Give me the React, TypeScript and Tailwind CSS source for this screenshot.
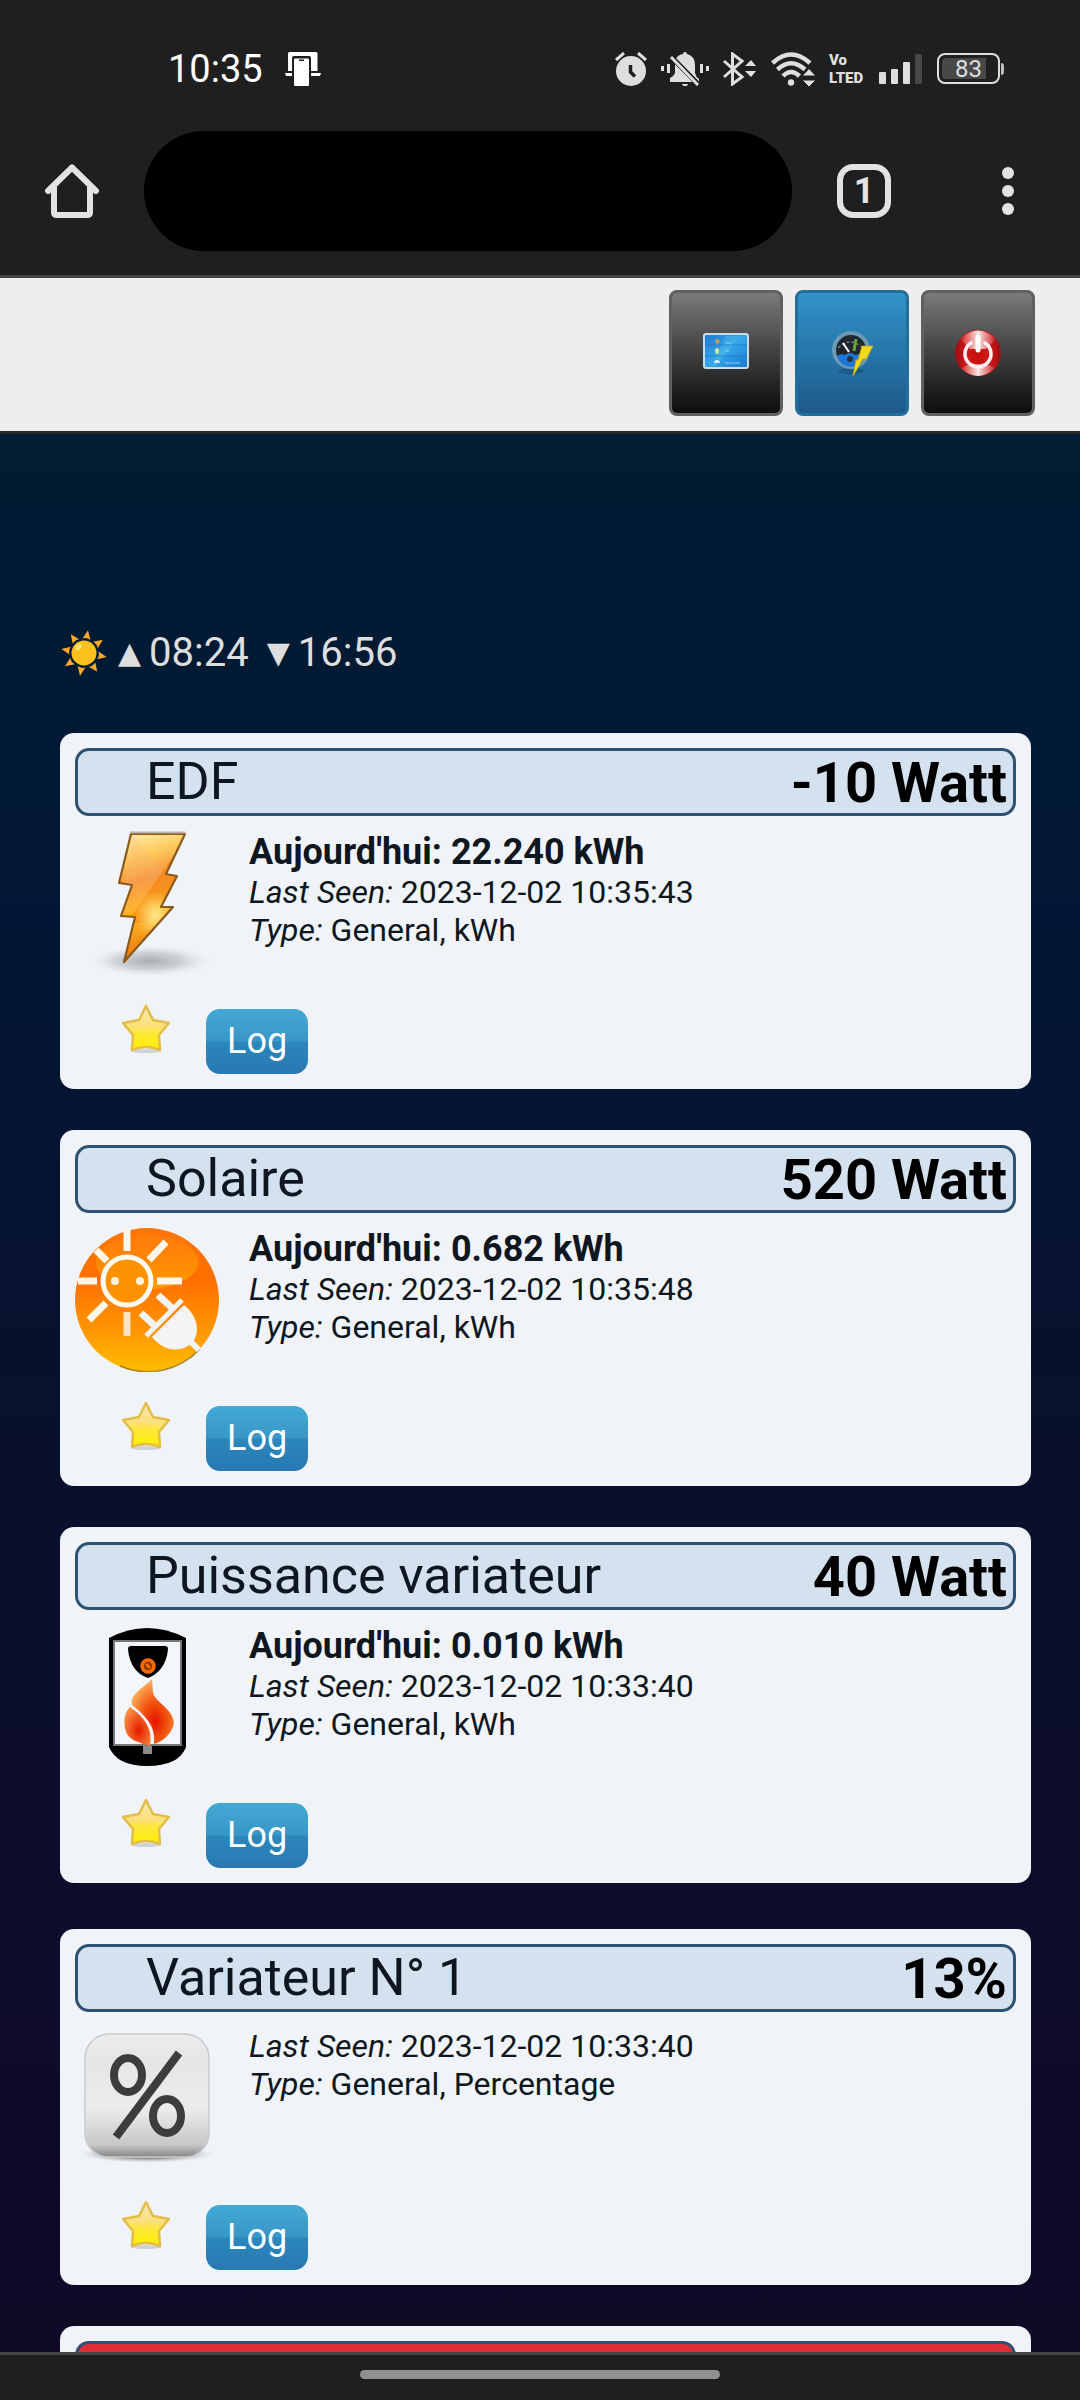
import type { ReactNode } from 'react';

type IconName = 'bolt' | 'solar' | 'heater' | 'percent';

interface Device {
  name: string;
  value: string;
  today?: string;
  lastSeen: string;
  type: string;
  icon: IconName;
}

// Devices are grouped the way the dashboard lists them
const groups: Device[][] = [
  [
    { name: 'EDF', value: '-10 Watt', today: '22.240 kWh', lastSeen: '2023-12-02 10:35:43', type: 'General, kWh', icon: 'bolt' },
    { name: 'Solaire', value: '520 Watt', today: '0.682 kWh', lastSeen: '2023-12-02 10:35:48', type: 'General, kWh', icon: 'solar' },
    { name: 'Puissance variateur', value: '40 Watt', today: '0.010 kWh', lastSeen: '2023-12-02 10:33:40', type: 'General, kWh', icon: 'heater' },
  ],
  [
    { name: 'Variateur N° 1', value: '13%', lastSeen: '2023-12-02 10:33:40', type: 'General, Percentage', icon: 'percent' },
  ],
];

/* ---------- Device icons ---------- */

function BoltIcon() {
  return (
    <svg viewBox="0 0 144 144" className="size-36">
      <defs>
        <linearGradient id="boltFill" x1="0" y1="0" x2="0.15" y2="1">
          <stop offset="0" stopColor="#fff0b0" />
          <stop offset="0.22" stopColor="#fdc85a" />
          <stop offset="0.4" stopColor="#f5943a" />
          <stop offset="0.62" stopColor="#fdb515" />
          <stop offset="0.78" stopColor="#fba31c" />
          <stop offset="1" stopColor="#e0700c" />
        </linearGradient>
        <radialGradient id="boltShadow">
          <stop offset="0" stopColor="#a9acb0" />
          <stop offset="0.5" stopColor="#c6c9cd" stopOpacity="0.8" />
          <stop offset="1" stopColor="#f1f4f9" stopOpacity="0" />
        </radialGradient>
        <radialGradient id="boltGlow">
          <stop offset="0" stopColor="#ffe88a" />
          <stop offset="1" stopColor="#ffe88a" stopOpacity="0" />
        </radialGradient>
        <clipPath id="boltClip">
          <path d="M56 3H110L91 43L102 45L86 76L98 76L49 131L60 86L46 85L57 54L44 52Z" />
        </clipPath>
      </defs>
      <ellipse cx="75" cy="130" rx="66" ry="17" fill="url(#boltShadow)" />
      <path d="M56 3H110L91 43L102 45L86 76L98 76L49 131L60 86L46 85L57 54L44 52Z" fill="url(#boltFill)" />
      <g clipPath="url(#boltClip)">
        <path d="M100 22L52 92L72 92L104 46L91 43Z" fill="#f47a10" opacity="0.45" />
        <ellipse cx="80" cy="84" rx="20" ry="24" fill="url(#boltGlow)" />
        <path d="M58 5L46 84L60 80L88 40Z" fill="#ffb37a" opacity="0.25" />
      </g>
      <path
        d="M56 3H110L91 43L102 45L86 76L98 76L49 131L60 86L46 85L57 54L44 52Z"
        fill="none"
        stroke="#8a5a1c"
        strokeWidth="2.2"
        strokeLinejoin="round"
      />
      <path d="M55 1.5H110" stroke="#b9b2aa" strokeWidth="2" />
    </svg>
  );
}

function SolarIcon() {
  return (
    <svg viewBox="0 0 144 144" className="size-36">
      <defs>
        <linearGradient id="solarFill" x1="0" y1="0" x2="0" y2="1">
          <stop offset="0" stopColor="#ff7608" />
          <stop offset="0.35" stopColor="#ff6f00" />
          <stop offset="0.7" stopColor="#ff9500" />
          <stop offset="1" stopColor="#ffbe00" />
        </linearGradient>
        <linearGradient id="solarGloss" x1="0" y1="0" x2="0" y2="1">
          <stop offset="0" stopColor="#ff7a0a" />
          <stop offset="1" stopColor="#ff9a00" />
        </linearGradient>
      </defs>
      <circle cx="72" cy="72" r="72" fill="url(#solarFill)" />
      <path d="M125 121A71 71 0 0 1 45 138" fill="none" stroke="#8a6410" strokeWidth="1.5" opacity="0.7" />
      <ellipse cx="72" cy="34" rx="51" ry="27" fill="url(#solarGloss)" />
      <circle cx="52" cy="53" r="24" fill="#ff9200" stroke="#fffaf2" strokeWidth="5" />
      <g stroke="#fff6ea" strokeWidth="7">
        <path d="M52 1V23M82 53H107M3 53H22M74 32L91 14M32 33L21 22M31 75L14 92" />
        <path d="M52 84V108" stroke="#ffe3c0" />
      </g>
      <g fill="#fff3dc">
        <circle cx="40" cy="53" r="4" />
        <circle cx="65" cy="53" r="4" />
      </g>
      <g stroke="#f4f4f4">
        <path d="M83 67L97 80M66 85L79 97" strokeWidth="7" />
        <path d="M71 108L107 72" strokeWidth="5" />
        <path d="M116 114L124 122" strokeWidth="6" />
      </g>
      <path d="M109 77C121 86 126 102 118 114C106 126 88 123 77 109Z" fill="#f4f4f4" />
    </svg>
  );
}

function HeaterIcon() {
  return (
    <svg viewBox="0 0 144 144" className="size-36">
      <defs>
        <radialGradient id="flameRight" cx="0.55" cy="0.65" r="0.6">
          <stop offset="0" stopColor="#e61400" />
          <stop offset="0.5" stopColor="#f2540f" />
          <stop offset="1" stopColor="#fca552" />
        </radialGradient>
        <radialGradient id="flameLeft" cx="0.55" cy="0.6" r="0.6">
          <stop offset="0" stopColor="#e41a00" />
          <stop offset="1" stopColor="#f98a3c" />
        </radialGradient>
      </defs>
      <path d="M34 13Q72 -7 111 13V122Q104 141 72 141Q42 141 34 122Z" fill="#000000" />
      <rect x="39" y="16" width="67" height="104" fill="#f3f6fa" stroke="#777777" strokeWidth="2" />
      <path d="M53 24Q53 21 56 21H90Q93 21 93 24C92 40 82 50 73 53C63 50 54 40 53 24Z" fill="#000000" />
      <circle cx="73" cy="41" r="6" fill="#8a3a00" stroke="#ff6a00" strokeWidth="3.5" />
      <path d="M71 39L75 43" stroke="#ff6a00" strokeWidth="2.5" />
      <path d="M77 54C78 62 77 68 80 72C86 80 98 86 99 98C97 109 87 117 79 119C81 102 72 92 57 80C55 68 68 64 77 54Z" fill="url(#flameRight)" />
      <path d="M55 82C49 88 48 97 51 107C54 115 65 118 75 121C78 105 71 93 55 82Z" fill="url(#flameLeft)" />
      <rect x="68" y="121" width="9" height="8" fill="#8a8a8a" />
    </svg>
  );
}

function PercentIcon() {
  return (
    <svg viewBox="0 0 144 144" className="size-36">
      <defs>
        <linearGradient id="keyFill" x1="0" y1="0" x2="0" y2="1">
          <stop offset="0" stopColor="#eceeed" />
          <stop offset="0.2" stopColor="#e4e6e5" />
          <stop offset="0.6" stopColor="#eceeed" />
          <stop offset="0.9" stopColor="#c6c8c7" />
          <stop offset="1" stopColor="#858786" />
        </linearGradient>
        <radialGradient id="keyShadow">
          <stop offset="0.5" stopColor="#777777" stopOpacity="0.8" />
          <stop offset="1" stopColor="#cccccc" stopOpacity="0" />
        </radialGradient>
      </defs>
      <ellipse cx="72" cy="127" rx="68" ry="9" fill="url(#keyShadow)" />
      <rect x="10" y="7" width="124" height="123" rx="24" fill="url(#keyFill)" stroke="#c9cacc" strokeWidth="1.5" />
      <g fill="none" stroke="#3c3e3e">
        <ellipse cx="53" cy="48" rx="14" ry="17" strokeWidth="8" />
        <ellipse cx="92" cy="89" rx="14" ry="17" strokeWidth="8" />
        <path d="M104 26L41 110" strokeWidth="8" />
      </g>
    </svg>
  );
}

function StarIcon() {
  return (
    <svg viewBox="0 0 48 48" className="size-12">
      <defs>
        <linearGradient id="starFill" x1="0" y1="0" x2="0" y2="1">
          <stop offset="0" stopColor="#fbe6b8" />
          <stop offset="0.45" stopColor="#fbe07a" />
          <stop offset="0.6" stopColor="#fde83a" />
          <stop offset="1" stopColor="#fff000" />
        </linearGradient>
      </defs>
      <ellipse cx="24" cy="46" rx="15" ry="2" fill="#cfd2d6" />
      <path
        d="M24 1L31 15L47 18L37 30L38 45Q24 39 10 45L11 30L1 18L17 15Z"
        fill="url(#starFill)"
        stroke="#e3bd48"
        strokeWidth="2.5"
        strokeLinejoin="round"
      />
    </svg>
  );
}

const deviceIcons: Record<IconName, () => ReactNode> = {
  bolt: BoltIcon,
  solar: SolarIcon,
  heater: HeaterIcon,
  percent: PercentIcon,
};

/* ---------- Phone status bar ---------- */

function StatusBar() {
  return (
    <div className="flex h-[131px] items-center justify-between pt-[6px] pr-[76px] pl-[168px] text-[#dedede]">
      <div className="flex items-center gap-[22px] text-white">
        <span className="text-[38px] leading-none">10:35</span>
        <svg viewBox="0 0 36 34" className="h-[34px] w-9" fill="currentColor">
          <path d="M3 1.5Q3 0 4.500 0H31Q32.500 0 32.500 1.500V19H26V6Q26 4 24 4H9Q7 4 7 6V19H3Z" />
          <rect x="9" y="6.500" width="15" height="27.500" rx="1" />
          <rect x="14" y="7.500" width="5" height="1.500" fill="#1f1f1f" />
          <path d="M0 21H7V24H1ZM26 21H36L35 24H26Z" />
        </svg>
      </div>

      <div className="flex items-center gap-[14px]">
        {/* Alarm */}
        <svg viewBox="0 0 32 34" className="h-[34px] w-8">
          <circle cx="16" cy="19" r="15" fill="currentColor" />
          <path d="M1 8L9 1M31 8L23 1" stroke="currentColor" strokeWidth="3" />
          <path d="M15.500 13V20L20 24.500" fill="none" stroke="#1f1f1f" strokeWidth="3.500" />
        </svg>
        {/* Vibrate */}
        <svg viewBox="0 0 48 34" className="h-[34px] w-12" fill="currentColor">
          <path d="M17 4Q20 2 22 2Q22 0 24 0Q26 0 26 2Q34 4 34 13V21Q35 25 38 27V30L13 9Z" />
          <path d="M14 12V21Q13 24 9 26V30H32Z" />
          <path d="M21 32H27Q26 34.500 24 34.500Q22 34.500 21 32Z" />
          <path d="M9.500 4L38 33" stroke="#1f1f1f" strokeWidth="5" />
          <path d="M10 5L37 33" stroke="currentColor" strokeWidth="3" />
          <path d="M0 14H3V19H0ZM6 12H9V21H6ZM39 12H42V21H39ZM45 14H48V19H45Z" />
        </svg>
        {/* Bluetooth */}
        <svg viewBox="0 0 34 34" className="size-[34px]" fill="none" stroke="currentColor" strokeWidth="3">
          <path d="M1 9L19 25L9.500 32V2L19 9L1 25" />
          <path d="M22 14L28 8L33 14ZM22 19H33L28 25Z" fill="currentColor" stroke="none" />
        </svg>
        {/* Wifi */}
        <svg viewBox="0 0 44 34" className="h-[34px] w-11" fill="none" stroke="currentColor" strokeWidth="4.500">
          <path d="M1.500 11Q20 -6 39 11M6.500 17.500Q20 5 34 17.500M12 24Q20 16 28.500 24" />
          <circle cx="20" cy="30.500" r="3.200" fill="currentColor" stroke="none" />
          <path d="M31 24L38 16.500L45 24ZM31 28H45L38 35Z" fill="currentColor" stroke="#1f1f1f" strokeWidth="1" />
        </svg>
        {/* VoLTE */}
        <div className="flex w-9 flex-col text-[15px] leading-[18px] font-black">
          <span>Vo</span>
          <span>LTED</span>
        </div>
        {/* Signal */}
        <svg viewBox="0 0 44 30" className="h-[30px] w-11" fill="currentColor">
          <rect x="0" y="18" width="7" height="12" rx="1" />
          <rect x="12" y="15" width="7" height="15" rx="1" />
          <rect x="24" y="8" width="7" height="22" rx="1" />
          <rect x="36" y="0" width="7" height="30" rx="2" fill="#484848" />
        </svg>
        {/* Battery */}
        <div className="flex items-center gap-px">
          <div className="flex h-[31px] w-[63px] rounded-lg border-2 border-[#dedede] p-[3px]">
            <div className="flex w-11 items-center justify-end rounded-l-sm bg-[#484848] pr-1 text-2xl leading-none">
              83
            </div>
          </div>
          <div className="h-3 w-[3px] rounded-r-sm bg-[#bdbdbd]" />
        </div>
      </div>
    </div>
  );
}

/* ---------- Browser bar ---------- */

function BrowserBar() {
  return (
    <div className="flex items-center gap-[45px] px-[45px] pb-6">
      <button aria-label="Accueil">
        <svg viewBox="0 0 54 54" className="size-[54px]" fill="none" stroke="#e3e3e3" strokeWidth="6">
          <path d="M3 27L27 3.500L51 27" strokeLinecap="round" strokeLinejoin="round" />
          <path d="M9 23V48Q9 51 12 51H42Q45 51 45 48V23" />
        </svg>
      </button>
      <input type="text" aria-label="Adresse" className="h-[120px] min-w-0 flex-1 rounded-full bg-black px-12 text-4xl" />
      <button
        aria-label="Onglets"
        className="flex size-[54px] items-center justify-center rounded-[16px] border-6 border-[#e3e3e3] text-4xl leading-none font-bold text-[#e3e3e3]"
      >
        1
      </button>
      <button aria-label="Menu" className="ml-[45px] flex w-[54px] flex-col items-center gap-[6px]">
        <span className="size-3 rounded-full bg-[#e3e3e3]" />
        <span className="size-3 rounded-full bg-[#e3e3e3]" />
        <span className="size-3 rounded-full bg-[#e3e3e3]" />
      </button>
    </div>
  );
}

/* ---------- Site toolbar ---------- */

function Toolbar() {
  return (
    <nav className="flex justify-end gap-3 border-b-3 border-[#262a2d] bg-[#eeeeee] px-[45px] pt-3 pb-[15px]">
      <button
        aria-label="Tableau de bord"
        className="flex h-[126px] w-[114px] items-center justify-center rounded-lg border-3 border-[#606060] bg-linear-to-b from-[#7b7b7b] to-[#0e0e0e]"
      >
        <svg viewBox="0 0 48 48" className="size-12">
          <defs>
            <linearGradient id="screenFill" x1="0" y1="0" x2="1" y2="1">
              <stop offset="0" stopColor="#1f78d4" />
              <stop offset="0.5" stopColor="#35a6e8" />
              <stop offset="1" stopColor="#1976cf" />
            </linearGradient>
          </defs>
          <rect x="2" y="5" width="44" height="34" rx="2" fill="url(#screenFill)" stroke="#c9dcea" strokeWidth="2" />
          <path d="M10 37L24 7H38L14 37Z" fill="#5cc4f0" opacity="0.35" />
          <path d="M3 16H45M3 27H45" stroke="#1766b8" opacity="0.5" />
          <path d="M13 11L16 10L18 12L15 16Z" fill="#c99a58" />
          <ellipse cx="15" cy="22" rx="2" ry="3" fill="#cfe89a" />
          <path d="M12 34Q12 31 15 31Q18 31 18 34H12Z" fill="#d8ecf6" />
          <path d="M24 14H29M23 22H27M23 34H38" stroke="#8fd0f4" strokeWidth="2" opacity="0.5" />
        </svg>
      </button>
      <button
        aria-label="Mesures"
        className="flex h-[126px] w-[114px] items-center justify-center rounded-lg border-3 border-[#236f99] bg-linear-to-b from-[#3193c9] to-[#1c5a8a]"
      >
        <svg viewBox="0 0 48 48" className="size-12">
          <ellipse cx="23" cy="42" rx="13" ry="3" fill="#194f78" opacity="0.6" />
          <circle cx="23" cy="21" r="17" fill="#20252e" stroke="#6b9ab4" strokeWidth="4" />
          <path d="M9 27Q13 24 17 26Q22 22 27 26Q32 24 37 27Q33 38 23 38Q13 38 9 27Z" fill="#1f74d8" />
          <path d="M10 19Q22 7 35 19" fill="none" stroke="#6d7683" strokeWidth="1.500" strokeDasharray="3 2" />
          <path d="M15 14L21 23" stroke="#ffffff" strokeWidth="2" />
          <path d="M26 22L28 10" stroke="#63a826" strokeWidth="3" />
          <circle cx="22" cy="30" r="3" fill="#22344a" />
          <path d="M34 17H45L38 30H35L25 47L28 31H30Z" fill="#f2d91c" stroke="#c9a80f" strokeWidth="0.800" />
        </svg>
      </button>
      <button
        aria-label="Arrêt"
        className="flex h-[126px] w-[114px] items-center justify-center rounded-lg border-3 border-[#606060] bg-linear-to-b from-[#7b7b7b] to-[#0e0e0e]"
      >
        <svg viewBox="0 0 48 48" className="size-12">
          <defs>
            <linearGradient id="powerFill" x1="0" y1="0" x2="1" y2="0">
              <stop offset="0" stopColor="#9c0c10" />
              <stop offset="0.25" stopColor="#d3191c" />
              <stop offset="0.5" stopColor="#c8100c" />
              <stop offset="0.75" stopColor="#d3191c" />
              <stop offset="1" stopColor="#9c0c10" />
            </linearGradient>
            <linearGradient id="powerGloss" x1="0" y1="0" x2="1" y2="0">
              <stop offset="0" stopColor="#ffffff" stopOpacity="0" />
              <stop offset="0.5" stopColor="#ffffff" stopOpacity="0.9" />
              <stop offset="1" stopColor="#ffffff" stopOpacity="0" />
            </linearGradient>
          </defs>
          <circle cx="24" cy="24" r="23" fill="url(#powerFill)" />
          <path d="M6 10Q24 -7 42 10L32 20H16ZM7 39L18 34Q24 37 30 34L41 39Q24 55 7 39Z" fill="url(#powerGloss)" />
          <path d="M17 14A13 13 0 1 0 31 14" fill="none" stroke="#fff1f1" strokeWidth="3.500" strokeLinecap="round" />
          <path d="M24 8V21" stroke="#ffffff" strokeWidth="5" strokeLinecap="round" />
        </svg>
      </button>
    </nav>
  );
}

function SunTimes() {
  return (
    <div className="flex h-[47px] items-center text-[40px] leading-[47px] text-[#dedede]">
      <svg viewBox="0 0 48 48" className="mr-[10px] size-12">
        <g fill="#fba92c">
          {[0, 45, 90, 135, 180, 225, 270, 315].map((angle) => (
            <path key={angle} d="M20 10L24 1L28 10Q24 8 20 10Z" transform={`rotate(${angle + 10} 24 24)`} />
          ))}
        </g>
        <circle cx="24" cy="24" r="12.500" fill="#fcc21b" />
        <ellipse cx="18.500" cy="18" rx="3.500" ry="2.500" fill="#fde27a" transform="rotate(-45 18.500 18)" />
      </svg>
      <span className="mr-2 font-['DejaVu_Sans'] text-[30px]">▲</span>
      <span>08:24</span>
      <span className="mr-2 ml-[18px] font-['DejaVu_Sans'] text-[30px]">▼</span>
      <span>16:56</span>
    </div>
  );
}

function DeviceCard({ device }: { device: Device }) {
  const Icon = deviceIcons[device.icon];
  return (
    <article className="rounded-[14px] bg-[#f0f4f9] p-[15px] text-[#0e1720]">
      <header className="flex h-[68px] items-start justify-between rounded-[14px] border-3 border-[#2f5171] bg-[#d4e1ee] pr-[6px] pl-[68px]">
        <h2 className="text-[52px] leading-[62px]">{device.name}</h2>
        <span className="text-[56px] leading-[64px] font-bold text-black">{device.value}</span>
      </header>

      <div className="mt-[15px] flex gap-[30px]">
        <Icon />
        <div className="text-[32px] leading-[38px]">
          {device.today && (
            <p className="text-[36px] leading-[42px] font-bold">Aujourd'hui: {device.today}</p>
          )}
          <p><i>Last Seen:</i> {device.lastSeen}</p>
          <p><i>Type:</i> {device.type}</p>
        </div>
      </div>

      <div className="mt-[30px] flex items-start gap-9 pl-[47px]">
        <button aria-label="Favori">
          <StarIcon />
        </button>
        <button className="mt-1 h-[65px] rounded-[14px] bg-[linear-gradient(#43a9d4,#3996c7_49%,#2b87bb_51%,#2978b2)] px-[21px] pb-[2px] text-[36px] leading-none text-white">
          Log
        </button>
      </div>
    </article>
  );
}

export default function App() {
  return (
    <div className="flex h-screen flex-col overflow-hidden bg-[#1f1f1f] font-[Roboto,sans-serif]">
      <div className="shrink-0 border-b-3 border-[#444444]">
        <StatusBar />
        <BrowserBar />
      </div>

      <Toolbar />

      <main className="min-h-0 flex-1 overflow-hidden bg-[linear-gradient(#001d33,#021735_25%,#08112e_50%,#0d0d2b_75%,#0f0926)] pt-[195px] pr-[49px] pl-[60px]">
        <SunTimes />

        <div className="mt-[57px] flex flex-col gap-[46px]">
          {groups.map((devices, i) => (
            <section key={i} className="flex flex-col gap-[41px]">
              {devices.map((device) => (
                <DeviceCard key={device.name} device={device} />
              ))}
              {/* Offline device, its header turns red */}
              {i === groups.length - 1 && (
                <article className="rounded-[14px] bg-[#f0f4f9] p-[15px]">
                  <header className="h-[68px] rounded-[14px] border-3 border-[#2f5171] bg-[#df2d3a]" />
                </article>
              )}
            </section>
          ))}
        </div>
      </main>

      <footer className="flex h-12 shrink-0 justify-center border-t-3 border-[#444444] pt-[15px]">
        <div className="h-[9px] w-1/3 rounded-full bg-[#8f8f8f]" />
      </footer>
    </div>
  );
}
